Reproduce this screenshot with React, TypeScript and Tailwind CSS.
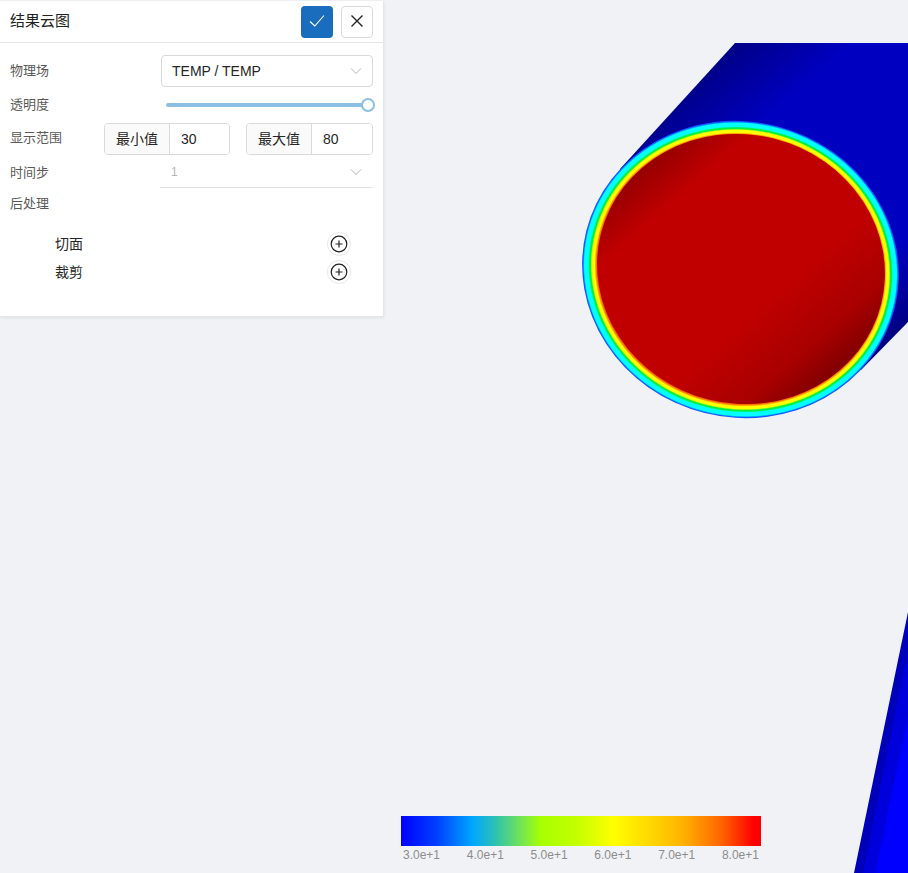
import React from 'react'

const scaleLabels = ['3.0e+1', '4.0e+1', '5.0e+1', '6.0e+1', '7.0e+1', '8.0e+1']

function Chevron() {
  return (
    <svg width="12" height="8" viewBox="0 0 12 8" fill="none" stroke="#b5b5b5" strokeWidth="1">
      <path d="M1 1.5 L6 6.5 L11 1.5" />
    </svg>
  )
}

function PlusButton() {
  return (
    <button className="w-[24px] h-[24px] rounded-full border border-[#e8e8e8] bg-white flex items-center justify-center">
      <svg width="18" height="18" viewBox="0 0 18 18" fill="none" stroke="#222" strokeWidth="1.2">
        <circle cx="9" cy="9" r="7.8" />
        <path d="M9 5.5 V12.5 M5.5 9 H12.5" />
      </svg>
    </button>
  )
}

function RangeInput({ label, value, addonWidth, inputWidth }: { label: string; value: string; addonWidth: string; inputWidth: string }) {
  return (
    <div className="flex h-[32px] border border-[#d9d9d9] rounded-[4px] text-[14px] text-[#262626] overflow-hidden">
      <div className={`${addonWidth} bg-[#fafafa] border-r border-[#d9d9d9] flex items-center justify-center`}>{label}</div>
      <div className={`${inputWidth} bg-white flex items-center pl-[11px]`}>{value}</div>
    </div>
  )
}

function Viewport() {
  return (
    <svg className="absolute inset-0" width="908" height="873" viewBox="0 0 908 873">
      <defs>
        <linearGradient id="bodyBlue" gradientUnits="userSpaceOnUse" x1="640" y1="120" x2="860" y2="370">
          <stop offset="0" stopColor="#000084" />
          <stop offset="0.25" stopColor="#0000c0" />
          <stop offset="0.8" stopColor="#0000c0" />
          <stop offset="1" stopColor="#000080" />
        </linearGradient>
        <linearGradient
          id="coreRed"
          gradientUnits="userSpaceOnUse"
          x1="640"
          y1="120"
          x2="860"
          y2="370"
          gradientTransform="rotate(-14 741 269)"
        >
          <stop offset="0.08" stopColor="#8c0000" />
          <stop offset="0.25" stopColor="#c00000" />
          <stop offset="0.66" stopColor="#c00000" />
          <stop offset="0.85" stopColor="#a80000" />
          <stop offset="0.95" stopColor="#840000" />
        </linearGradient>
        <radialGradient id="rings" cx="50%" cy="50%" r="50%">
          <stop offset="0.9" stopColor="#e05000" />
          <stop offset="0.912" stopColor="#ff8000" />
          <stop offset="0.922" stopColor="#ffff00" />
          <stop offset="0.938" stopColor="#ffff00" />
          <stop offset="0.947" stopColor="#00f040" />
          <stop offset="0.953" stopColor="#00f040" />
          <stop offset="0.962" stopColor="#00ffff" />
          <stop offset="0.985" stopColor="#00ffff" />
          <stop offset="0.994" stopColor="#1060ff" />
          <stop offset="1" stopColor="#1848ff" />
        </radialGradient>
      </defs>

      {/* pipe body */}
      <polygon points="735,43 908,43 908,322 861,370 620,169" fill="url(#bodyBlue)" />
      <g className="blur-[0.5px]">
        <ellipse cx="740.5" cy="269.5" rx="159" ry="148" transform="rotate(14 740.5 269.5)" fill="url(#rings)" />
        <ellipse cx="741" cy="269" rx="144.5" ry="134.5" transform="rotate(14 741 269)" fill="url(#coreRed)" />
      </g>

      {/* second body, lower right */}
      <polygon points="908,612 908,873 854,873" fill="#0000b8" />
      <polygon points="908,650 908,873 863,873" fill="#0000dc" />
      <polygon points="908,717 908,873 875,873" fill="#0000ff" />
    </svg>
  )
}

export default function App() {
  return (
    <div
      className="relative w-[908px] h-[873px] overflow-hidden bg-[#f0f2f6] font-['Liberation_Sans','Noto_Sans_CJK_SC',sans-serif]"
    >
      <Viewport />

      {/* Panel */}
      <div className="absolute left-0 top-[1px] w-[384px] h-[316px] bg-white border-r border-b border-[#e4e6ea] shadow-[0_1px_3px_rgba(0,0,0,0.08)]">
        <div className="h-[42px] border-b border-[#e5e5e5] flex items-center justify-between pl-[10px] pr-[10px]">
          <span className="text-[15px] text-[#222]">结果云图</span>
          <div className="flex gap-[8px]">
            <button className="w-[32px] h-[32px] rounded-[4px] bg-[#1a6dbd] flex items-center justify-center">
              <svg className="-translate-y-px" width="16" height="14" viewBox="0 0 16 14" fill="none" stroke="#fff" strokeWidth="1.1">
                <path d="M1 7.5 L5.8 12 L15 1.5" />
              </svg>
            </button>
            <button className="w-[32px] h-[32px] rounded-[4px] bg-white border border-[#d9d9d9] flex items-center justify-center">
              <svg className="-translate-y-px" width="14" height="14" viewBox="0 0 14 14" fill="none" stroke="#222" strokeWidth="1.4">
                <path d="M1.5 1.5 L12.5 12.5 M12.5 1.5 L1.5 12.5" />
              </svg>
            </button>
          </div>
        </div>

        <div className="pt-[12px] pl-[10px] pr-[10px] flex flex-col gap-[2px]">
          {/* 物理场 */}
          <div className="h-[32px] flex items-center justify-between">
            <span className="text-[13px] text-[#595959]">物理场</span>
            <div className="w-[212px] h-[32px] border border-[#d9d9d9] rounded-[4px] flex items-center justify-between pl-[10px] pr-[10px] text-[14px] text-[#262626]">
              <span>TEMP / TEMP</span>
              <Chevron />
            </div>
          </div>

          {/* 透明度 */}
          <div className="h-[32px] flex items-center justify-between">
            <span className="text-[13px] text-[#595959]">透明度</span>
            <div className="relative w-[202px] mr-[5px] h-[4px] rounded-full bg-[#8cc0e2]">
              <div className="absolute right-[-7px] top-[-5px] w-[14px] h-[14px] rounded-full bg-white border-2 border-[#8cc0e2]"></div>
            </div>
          </div>

          {/* 显示范围 */}
          <div className="h-[32px] flex items-center justify-between">
            <span className="text-[13px] text-[#595959] -translate-y-px">显示范围</span>
            <div className="flex gap-[16px]">
              <RangeInput label="最小值" value="30" addonWidth="w-[65px]" inputWidth="w-[59px]" />
              <RangeInput label="最大值" value="80" addonWidth="w-[65px]" inputWidth="w-[60px]" />
            </div>
          </div>

          {/* 时间步 */}
          <div className="h-[32px] flex items-center justify-between">
            <span className="text-[13px] text-[#595959]">时间步</span>
            <div className="w-[213px] h-[32px] border-b border-[#e3e3e3] flex items-center justify-between pl-[11px] pr-[11px] text-[12px] text-[#b5b5b5] -translate-y-px">
              <span>1</span>
              <Chevron />
            </div>
          </div>

          {/* 后处理 */}
          <div className="h-[26px] flex items-center">
            <span className="text-[13px] text-[#595959]">后处理</span>
          </div>
        </div>

        <div className="mt-[13px] pl-[55px] pr-[32px] flex flex-col">
          <div className="h-[28px] flex items-center justify-between text-[14px] text-[#262626]">
            <span>切面</span>
            <PlusButton />
          </div>
          <div className="h-[28px] flex items-center justify-between text-[14px] text-[#262626]">
            <span>裁剪</span>
            <PlusButton />
          </div>
        </div>
      </div>

      {/* Color scale */}
      <div className="absolute left-[401px] top-[816px] w-[360px]">
        <div className="h-[30px] bg-[linear-gradient(90deg,#0000ff_0%,#0040ff_10%,#00a8ff_20%,#2cc0b4_26%,#78e84c_34%,#a8ff00_39%,#c4ff00_49%,#ffff00_59%,#ffd000_71%,#ffb400_78%,#ff6400_89%,#ff0000_98%)]"></div>
        <div className="flex justify-between px-[2px] text-[12px] leading-[18px] text-[#8c8c8c]">
          {scaleLabels.map((label) => (
            <span key={label}>{label}</span>
          ))}
        </div>
      </div>
    </div>
  )
}
